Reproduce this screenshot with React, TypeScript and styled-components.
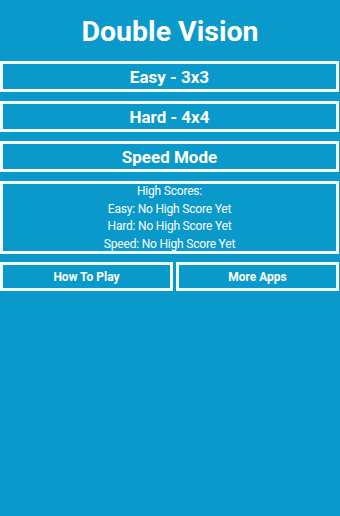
import React from "react";
import styled, { createGlobalStyle } from "styled-components";

const GlobalStyle = createGlobalStyle`
  html, body {
    margin: 0;
    padding: 0;
    background: #0a99cb;
  }
  body {
    font-family: Roboto, "Noto Sans", "DejaVu Sans", sans-serif;
    color: #ffffff;
  }
`;

const scores = [
  { label: "Easy", value: "No High Score Yet" },
  { label: "Hard", value: "No High Score Yet" },
  { label: "Speed", value: "No High Score Yet" },
];

export default function App() {
  return (
    <>
      <GlobalStyle />
      <Screen>
        <Title>Double Vision</Title>
        <Menu>
          <ModeButton>Easy - 3x3</ModeButton>
          <ModeButton>Hard - 4x4</ModeButton>
          <ModeButton>Speed Mode</ModeButton>
          <ScoreBox>
            <div>High Scores:</div>
            {scores.map((s) => (
              <div key={s.label}>
                {s.label}: {s.value}
              </div>
            ))}
          </ScoreBox>
          <BottomRow>
            <SmallButton $width={173}>How To Play</SmallButton>
            <SmallButton $width={163}>More Apps</SmallButton>
          </BottomRow>
        </Menu>
      </Screen>
    </>
  );
}

const Screen = styled.div`
  width: 340px;
  height: 516px;
  background: #0a99cb;
  display: flex;
  flex-direction: column;
`;

const Title = styled.h1`
  margin: 0;
  height: 61px;
  display: flex;
  align-items: center;
  justify-content: center;
  font-size: 28.5px;
  font-weight: 700;
  padding-top: 1px;
  box-sizing: border-box;
`;

const Menu = styled.div`
  display: flex;
  flex-direction: column;
  gap: 9px;
  padding-right: 1px;
`;

const Boxed = styled.div`
  box-sizing: border-box;
  border: 3px solid #f4fbfd;
  display: flex;
  align-items: center;
  justify-content: center;
  text-align: center;
`;

const ModeButton = styled(Boxed)`
  height: 31px;
  font-size: 17px;
  font-weight: 700;
`;

const ScoreBox = styled(Boxed)`
  height: 73px;
  flex-direction: column;
  font-size: 12px;
  letter-spacing: -0.2px;
  line-height: 17.5px;
  padding-top: 1px;
`;

const BottomRow = styled.div`
  display: flex;
  gap: 3px;
  margin-top: -1px;
`;

const SmallButton = styled(Boxed)<{ $width: number }>`
  width: ${({ $width }) => $width}px;
  height: 29px;
  font-size: 12px;
  font-weight: 700;
`;
